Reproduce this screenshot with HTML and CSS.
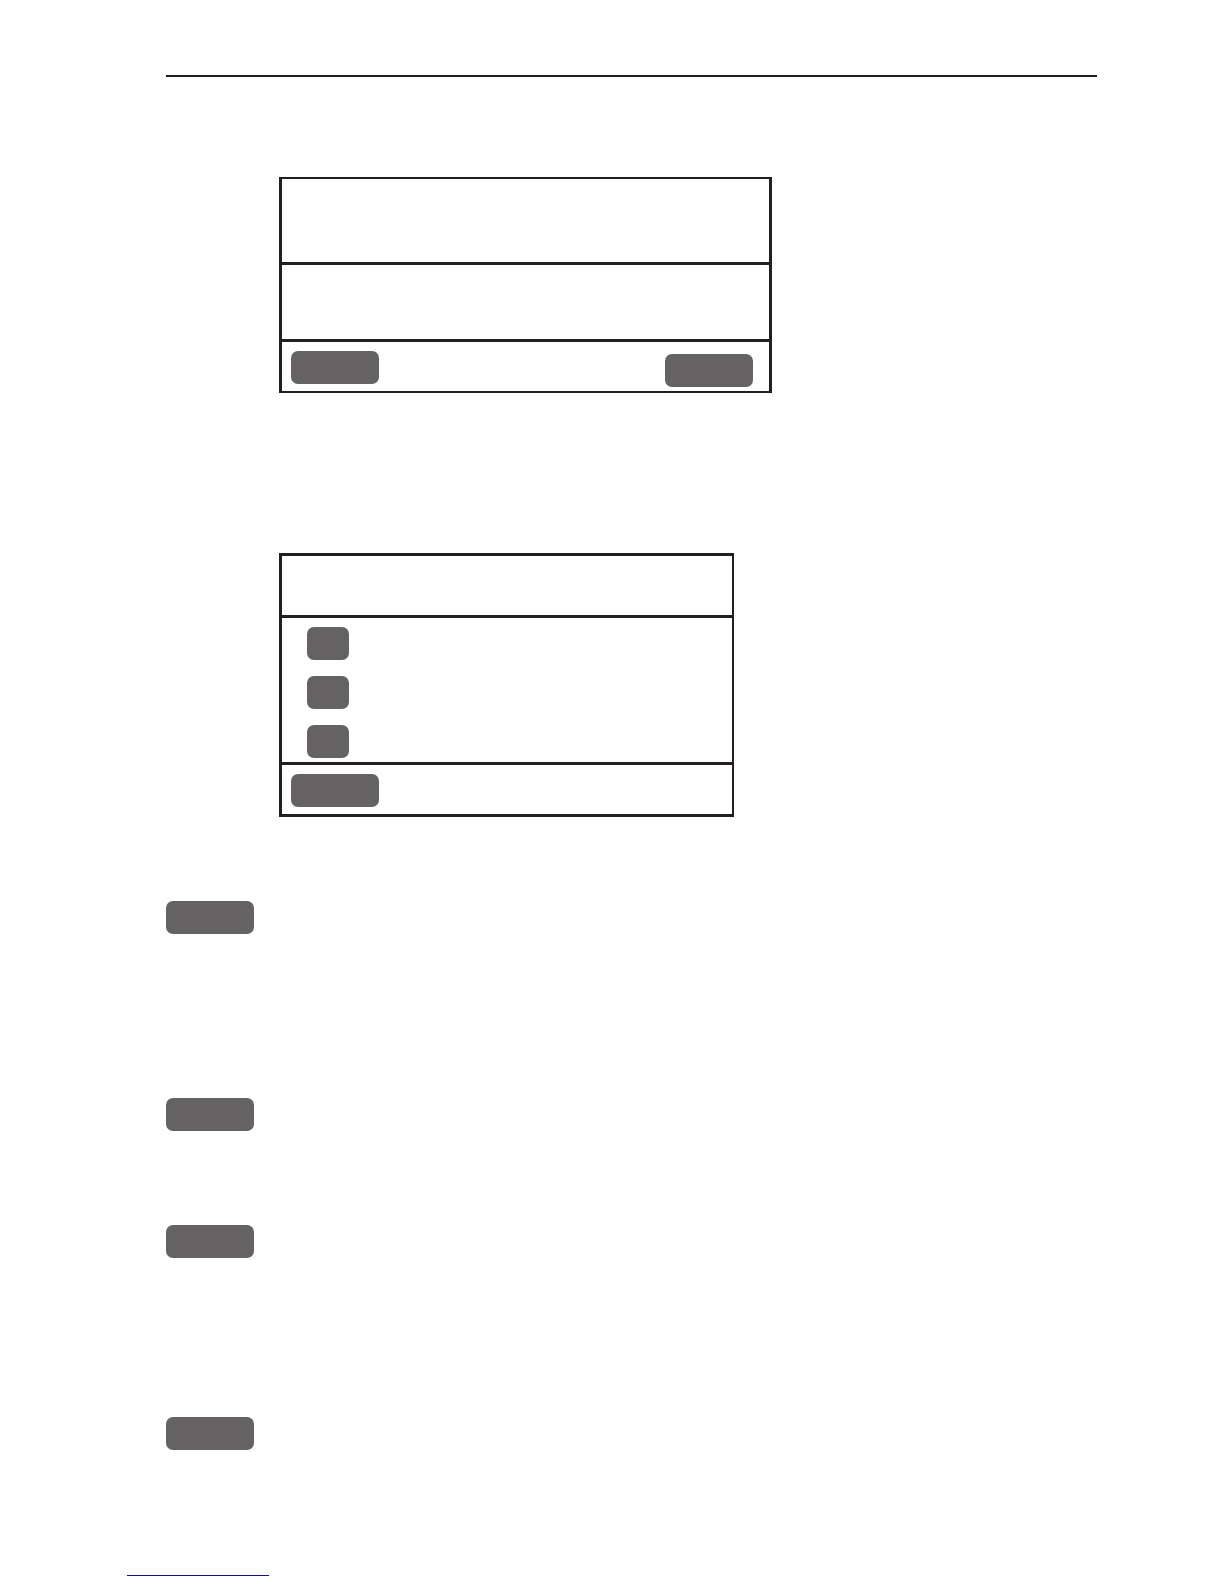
FILE: index.html
```html
<!DOCTYPE html>
<html lang="en">
<head>
  <meta charset="utf-8">
  <meta name="viewport" content="width=device-width, initial-scale=1">
  <title>Manual</title>
  <link rel="stylesheet" href="styles.css">
</head>
<body>
  <main class="page">
    <hr class="rule">

    <section class="panel panel-wide">
      <div class="panel-head"></div>
      <div class="panel-body"></div>
      <div class="panel-foot">
        <button class="key" type="button" aria-label="Left key"></button>
        <button class="key key-low" type="button" aria-label="Right key"></button>
      </div>
    </section>

    <section class="panel panel-menu">
      <div class="panel-head"></div>
      <div class="panel-body">
        <button class="key key-small" type="button" aria-label="Option 1"></button>
        <button class="key key-small" type="button" aria-label="Option 2"></button>
        <button class="key key-small" type="button" aria-label="Option 3"></button>
      </div>
      <div class="panel-foot">
        <button class="key" type="button" aria-label="Menu key"></button>
      </div>
    </section>

    <section class="entries">
      <div class="entry entry-long"><button class="key" type="button" aria-label="Key 1"></button></div>
      <div class="entry entry-short"><button class="key" type="button" aria-label="Key 2"></button></div>
      <div class="entry entry-medium"><button class="key" type="button" aria-label="Key 3"></button></div>
      <div class="entry"><button class="key" type="button" aria-label="Key 4"></button></div>
    </section>
  </main>
  <footer class="footer">
    <a class="footer-link" href="#" aria-label="Website"></a>
  </footer>
</body>
</html>
```
FILE: styles.css
```css
:root {
  --ink: #231f20;
  --key: #656263;
}

* {
  box-sizing: border-box;
}

body {
  margin: 0;
  background: #fff;
  font-family: "Liberation Sans", Arial, sans-serif;
}

.page {
  padding: 75px 127px 0 166px;
}

.rule {
  height: 2px;
  margin: 0 0 100px;
  border: 0;
  background: var(--ink);
}

.panel {
  margin-left: 113px;
  border: 3px solid var(--ink);
}

.panel-wide {
  max-width: 493px;
  margin-bottom: 160px;
  border-top-width: 2px;
  border-bottom-width: 2px;
}

.panel-menu {
  max-width: 455px;
  margin-bottom: 84px;
  border-right-width: 2px;
}

.panel-head,
.panel-body {
  border-bottom: 3px solid var(--ink);
}

.panel-wide .panel-head {
  min-height: 86px;
}

.panel-wide .panel-body {
  min-height: 77px;
}

.panel-menu .panel-head {
  min-height: 62px;
}

.panel-menu .panel-body {
  display: flex;
  flex-direction: column;
  gap: 16px;
  padding: 9px 25px 4px;
}

.panel-foot {
  display: flex;
  justify-content: space-between;
  align-items: flex-start;
  min-height: 49px;
  padding: 9px 16px 4px 9px;
}

.key {
  display: block;
  width: 88px;
  height: 33px;
  padding: 0;
  border: 0;
  border-radius: 7px;
  background: var(--key);
}

.key-small {
  width: 42px;
}

.key-low {
  margin-top: 3px;
}

.entry-long {
  min-height: 197px;
}

.entry-short {
  min-height: 127px;
}

.entry-medium {
  min-height: 192px;
}

.footer {
  padding: 106px 127px 8px;
}

.footer-link {
  display: block;
  width: 142px;
  height: 20px;
  border-bottom: 1px solid #14148c;
}
```
